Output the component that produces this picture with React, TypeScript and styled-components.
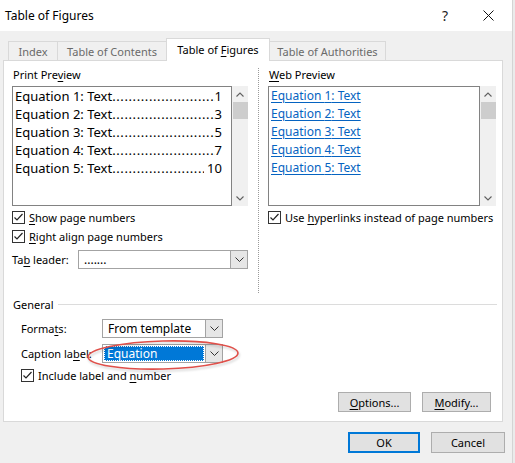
import styled, { createGlobalStyle } from "styled-components";

const GlobalStyle = createGlobalStyle`
  html, body {
    margin: 0;
    padding: 0;
  }
  body {
    font-family: "Noto Sans", "DejaVu Sans", sans-serif;
    font-size: 11px;
    color: #000;
    background: #f0f0f0;
  }
`;

const Screen = styled.div`
  display: flex;
  width: 515px;
  height: 463px;
  overflow: hidden;
`;

const Dialog = styled.div`
  width: 512px;
  display: flex;
  flex-direction: column;
  background: #f0f0f0;
`;

const WindowEdge = styled.div`
  flex: 1;
  background: #ebebeb;
  border-left: 1px solid #d4d4d4;
`;

const TitleBar = styled.div`
  height: 31px;
  display: flex;
  align-items: center;
  padding-left: 5px;
  background: #fff;
  font-size: 12px;
`;

const HelpMark = styled.span`
  margin-left: auto;
  margin-right: 35px;
  font-size: 14px;
  color: #222;
`;

const CloseIcon = styled.svg`
  width: 11px;
  height: 11px;
  margin-right: 18px;
`;

const Body = styled.div`
  flex: 1;
  padding-top: 7px;
  display: flex;
  flex-direction: column;
`;

const TabStrip = styled.div`
  display: flex;
  align-items: flex-end;
  height: 22px;
  padding-left: 8px;
`;

const Tab = styled.div<{ $w: number; $active?: boolean }>`
  position: relative;
  z-index: ${(p) => (p.$active ? 1 : 0)};
  width: ${(p) => p.$w}px;
  height: ${(p) => (p.$active ? 23 : 19)}px;
  margin-bottom: ${(p) => (p.$active ? -1 : 0)}px;
  box-sizing: border-box;
  display: flex;
  align-items: center;
  justify-content: center;
  padding-bottom: ${(p) => (p.$active ? 2 : 0)}px;
  background: ${(p) => (p.$active ? "#fff" : "#f0f0f0")};
  border: 1px solid #d9d9d9;
  border-bottom: none;
  color: ${(p) => (p.$active ? "#000" : "#6a6a6a")};
  & + & {
    margin-left: -1px;
  }
`;

const Panel = styled.div`
  width: 500px;
  height: 362px;
  margin-left: 3px;
  box-sizing: border-box;
  background: #fff;
  border: 1px solid #d9d9d9;
  padding: 0 6px 0 8px;
  display: flex;
  flex-direction: column;
`;

const Upper = styled.div`
  display: grid;
  grid-template-columns: 236px 20px 228px;
  height: 232px;
`;

const Column = styled.div`
  display: flex;
  flex-direction: column;
  padding-top: 6px;
`;

const FieldLabel = styled.div`
  line-height: 16px;
  margin-bottom: 3px;
  padding-left: 1px;
`;

const Key = styled.span`
  text-decoration: underline;
  text-underline-offset: 2px;
`;

const Preview = styled.div`
  display: flex;
  height: 120px;
  margin-bottom: 2px;
`;

const ListArea = styled.div<{ $size: number }>`
  flex: 1;
  border: 1px solid #828282;
  padding: 0 9px 0 2px;
  font-size: ${(p) => p.$size}px;
  line-height: 18px;
  overflow: hidden;
`;

const LeaderLine = styled.div`
  display: flex;
  white-space: nowrap;
`;

const Dots = styled.span`
  flex: 1;
  min-width: 0;
  overflow: hidden;
  letter-spacing: 0.6px;
`;

const LinkLine = styled.div`
  color: #0563c1;
  text-decoration: underline;
  text-underline-offset: 2px;
`;

const ScrollTrack = styled.div`
  width: 16px;
  background: #f0f0f0;
  display: flex;
  flex-direction: column;
  align-items: center;
`;

const ScrollArrow = styled.div`
  height: 16px;
  width: 16px;
  display: flex;
  align-items: center;
  justify-content: center;
`;

const ScrollThumb = styled.div`
  width: 15px;
  height: 17px;
  background: #cdcdcd;
`;

const ScrollGap = styled.div`
  flex: 1;
`;

const CheckRow = styled.div<{ $indent?: number }>`
  display: flex;
  align-items: center;
  gap: 4px;
  height: 19px;
  padding-left: ${(p) => p.$indent ?? 0}px;
`;

const CheckBox = styled.span`
  width: 13px;
  height: 13px;
  box-sizing: border-box;
  border: 1px solid #333;
  background: #fff;
  display: flex;
  align-items: center;
  justify-content: center;
`;

const LeaderRow = styled.div`
  display: flex;
  align-items: center;
  margin-top: 4px;
`;

const RowLabel = styled.span<{ $w: number }>`
  width: ${(p) => p.$w}px;
`;

const Select = styled.div<{ $w: number }>`
  width: ${(p) => p.$w}px;
  height: 19px;
  box-sizing: border-box;
  border: 1px solid #a3a3a3;
  background: #fff;
  display: flex;
`;

const SelectValue = styled.div<{ $focused?: boolean }>`
  flex: 1;
  display: flex;
  align-items: center;
  padding-left: ${(p) => (p.$focused ? 3 : 5)}px;
  margin: ${(p) => (p.$focused ? "1px" : "0")};
  background: ${(p) => (p.$focused ? "#0078d7" : "transparent")};
  color: ${(p) => (p.$focused ? "#fff" : "#000")};
  outline: ${(p) => (p.$focused ? "1px dotted #fff" : "none")};
  outline-offset: -1px;
  font-size: 12px;
`;

const SelectButton = styled.div`
  width: 16px;
  border-left: 1px solid #a3a3a3;
  background: #e6e6e6;
  display: flex;
  align-items: center;
  justify-content: center;
`;

const Divider = styled.div`
  justify-self: center;
  width: 0;
  height: 225px;
  margin-top: 7px;
  border-left: 1px dotted #9a9a9a;
`;

const GroupHeader = styled.div`
  display: flex;
  align-items: center;
  gap: 4px;
  height: 14px;
  margin-top: 4px;
  padding-left: 1px;
`;

const GroupRule = styled.div`
  flex: 1;
  height: 1px;
  margin-right: -1px;
  background: #dcdcdc;
`;

const FormArea = styled.div`
  position: relative;
  margin-top: 8px;
  margin-bottom: 3px;
`;

const FormGrid = styled.div`
  display: grid;
  grid-template-columns: 81px 121px;
  row-gap: 6px;
  align-items: center;
  padding-left: 9px;
`;

const Highlight = styled.svg`
  position: absolute;
  left: 74px;
  top: 20px;
  width: 154px;
  height: 32px;
  overflow: visible;
  filter: drop-shadow(1px 2px 1px rgba(0, 0, 0, 0.18));
  pointer-events: none;
`;

const ButtonRow = styled.div`
  display: flex;
  justify-content: flex-end;
  gap: 11px;
  margin-top: 7px;
  padding-right: 5px;
`;

const Footer = styled.div`
  display: flex;
  justify-content: flex-end;
  gap: 11px;
  padding: 10px 7px 0 0;
`;

const Button = styled.button<{ $w: number; $h: number; $default?: boolean }>`
  width: ${(p) => p.$w}px;
  height: ${(p) => p.$h}px;
  padding: 0;
  font-family: inherit;
  font-size: 11px;
  color: #000;
  background: #e1e1e1;
  border: 1px solid ${(p) => (p.$default ? "#0078d7" : "#adadad")};
  box-shadow: ${(p) => (p.$default ? "inset 0 0 0 1px #0078d7" : "none")};
`;

const Chevron = ({ up = false }: { up?: boolean }) => (
  <svg width="8" height="5" viewBox="0 0 8 5">
    <polyline
      points={up ? "0.5,4.5 4,1 7.5,4.5" : "0.5,0.5 4,4 7.5,0.5"}
      fill="none"
      stroke="#606060"
      strokeWidth="1.1"
    />
  </svg>
);

const DropChevron = () => (
  <svg width="9" height="5" viewBox="0 0 9 5">
    <polyline points="0.5,0.5 4.5,4.5 8.5,0.5" fill="none" stroke="#333" strokeWidth="1" />
  </svg>
);

const Tick = () => (
  <CheckBox>
    <svg width="11" height="11" viewBox="0 0 11 11">
      <polyline points="1.5,5.5 4,8 9.5,2" fill="none" stroke="#222" strokeWidth="1.2" />
    </svg>
  </CheckBox>
);

const Check = ({ children, indent }: { children: React.ReactNode; indent?: number }) => (
  <CheckRow $indent={indent}>
    <Tick />
    <span>{children}</span>
  </CheckRow>
);

const Scroller = () => (
  <ScrollTrack>
    <ScrollArrow>
      <Chevron up />
    </ScrollArrow>
    <ScrollThumb />
    <ScrollGap />
    <ScrollArrow>
      <Chevron />
    </ScrollArrow>
  </ScrollTrack>
);

const entries = [
  { n: 1, page: "1" },
  { n: 2, page: "3" },
  { n: 3, page: "5" },
  { n: 4, page: "7" },
  { n: 5, page: "\u00a010" },
];

const dots = ".".repeat(90);

export default function App() {
  return (
    <>
      <GlobalStyle />
      <Screen>
        <Dialog>
          <TitleBar>
            <span>Table of Figures</span>
            <HelpMark>?</HelpMark>
            <CloseIcon viewBox="0 0 11 11">
              <path d="M0.5 0.5 L10.5 10.5 M10.5 0.5 L0.5 10.5" stroke="#111" strokeWidth="1" />
            </CloseIcon>
          </TitleBar>
          <Body>
            <TabStrip>
              <Tab $w={50}>Index</Tab>
              <Tab $w={110}>Table of Contents</Tab>
              <Tab $w={104} $active>
                <span>
                  Table of <Key>F</Key>igures
                </span>
              </Tab>
              <Tab $w={117}>Table of Authorities</Tab>
            </TabStrip>
            <Panel>
              <Upper>
                <Column>
                  <FieldLabel>
                    Print Pre<Key>v</Key>iew
                  </FieldLabel>
                  <Preview>
                    <ListArea $size={13}>
                      {entries.map((e) => (
                        <LeaderLine key={e.n}>
                          <span>Equation {e.n}: Text</span>
                          <Dots>{dots}</Dots>
                          <span>{e.page}</span>
                        </LeaderLine>
                      ))}
                    </ListArea>
                    <Scroller />
                  </Preview>
                  <Check>
                    <Key>S</Key>how page numbers
                  </Check>
                  <Check>
                    <Key>R</Key>ight align page numbers
                  </Check>
                  <LeaderRow>
                    <RowLabel $w={66}>
                      Ta<Key>b</Key> leader:
                    </RowLabel>
                    <Select $w={170}>
                      <SelectValue>.......</SelectValue>
                      <SelectButton>
                        <DropChevron />
                      </SelectButton>
                    </Select>
                  </LeaderRow>
                </Column>
                <Divider />
                <Column>
                  <FieldLabel>
                    <Key>W</Key>eb Preview
                  </FieldLabel>
                  <Preview>
                    <ListArea $size={12}>
                      {entries.map((e) => (
                        <LinkLine key={e.n}>Equation {e.n}: Text</LinkLine>
                      ))}
                    </ListArea>
                    <Scroller />
                  </Preview>
                  <Check>
                    Use <Key>h</Key>yperlinks instead of page numbers
                  </Check>
                </Column>
              </Upper>
              <GroupHeader>
                <span>General</span>
                <GroupRule />
              </GroupHeader>
              <FormArea>
                <FormGrid>
                  <span>
                    Forma<Key>t</Key>s:
                  </span>
                  <Select $w={121}>
                    <SelectValue>From template</SelectValue>
                    <SelectButton>
                      <DropChevron />
                    </SelectButton>
                  </Select>
                  <span>
                    Caption la<Key>b</Key>el:
                  </span>
                  <Select $w={121}>
                    <SelectValue $focused>Equation</SelectValue>
                    <SelectButton>
                      <DropChevron />
                    </SelectButton>
                  </Select>
                </FormGrid>
                <Highlight viewBox="0 0 154 32">
                  <ellipse
                    cx="77"
                    cy="16"
                    rx="75"
                    ry="14"
                    transform="rotate(-1.5 77 16)"
                    fill="none"
                    stroke="#e0504a"
                    strokeWidth="1.6"
                  />
                </Highlight>
              </FormArea>
              <Check indent={9}>
                Include label and <Key>n</Key>umber
              </Check>
              <ButtonRow>
                <Button $w={73} $h={20}>
                  <Key>O</Key>ptions...
                </Button>
                <Button $w={69} $h={20}>
                  <Key>M</Key>odify...
                </Button>
              </ButtonRow>
            </Panel>
            <Footer>
              <Button $w={72} $h={21} $default>
                OK
              </Button>
              <Button $w={74} $h={21}>
                Cancel
              </Button>
            </Footer>
          </Body>
        </Dialog>
        <WindowEdge />
      </Screen>
    </>
  );
}
